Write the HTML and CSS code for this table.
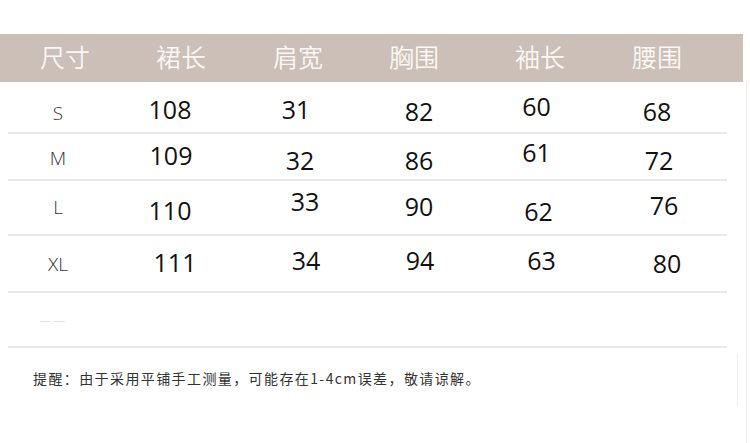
FILE: index.html
```html
<!DOCTYPE html>
<html lang="zh-CN">
<head>
<meta charset="utf-8">
<title>尺码表</title>
<link rel="stylesheet" href="styles.css">
</head>
<body>
<div class="page">
  <div class="sheet">
    <div class="head">
      <div>尺寸</div>
      <div>裙长</div>
      <div>肩宽</div>
      <div>胸围</div>
      <div>袖长</div>
      <div>腰围</div>
    </div>
    <div class="row r1">
      <div class="size y6">S</div>
      <div class="num y2 x-1">108</div>
      <div class="num y2 x-4">31</div>
      <div class="num y4">82</div>
      <div class="num y-1">60</div>
      <div class="num y4 x-2">68</div>
    </div>
    <div class="row r2">
      <div class="size y1">M</div>
      <div class="num y-2">109</div>
      <div class="num y3">32</div>
      <div class="num y3">86</div>
      <div class="num y-5">61</div>
      <div class="num y3">72</div>
    </div>
    <div class="row r3">
      <div class="size y-1">L</div>
      <div class="num y2 x-1">110</div>
      <div class="num y-7 x5">33</div>
      <div class="num y-2">90</div>
      <div class="num y3 x2">62</div>
      <div class="num y-3 x5">76</div>
    </div>
    <div class="row r4">
      <div class="size">XL</div>
      <div class="num y-2 x4">111</div>
      <div class="num y-4 x6">34</div>
      <div class="num y-4 x1">94</div>
      <div class="num y-4 x5">63</div>
      <div class="num y-1 x8">80</div>
    </div>
    <div class="row r5">
      <div class="blank"><span class="dash"></span><span class="dash"></span></div>
    </div>
    <div class="note">
      <p class="note-text">提醒：由于采用平铺手工测量，可能存在1-4cm误差，敬请谅解。</p>
      <span class="note-bar"></span>
    </div>
  </div>
  <span class="edge"></span>
</div>
</body>
</html>
```

FILE: styles.css
```css
html, body {
  margin: 0;
  padding: 0;
  background: #ffffff;
}

.page {
  display: flex;
  width: 750px;
  height: 443px;
  overflow: hidden;
}

.sheet {
  width: 746px;
  padding-top: 34px;
}

.edge {
  width: 1px;
  margin-top: 82px;
  background: #efefef;
}

.head {
  width: 743px;
  height: 48px;
  box-sizing: border-box;
  padding-bottom: 4px;
  background: #cbbfb7;
  display: grid;
  grid-template-columns: 130px 102px 132px 100px 152px 82px;
  font-family: "Noto Sans CJK SC", "Noto Sans", sans-serif;
  font-weight: 350;
  font-size: 25px;
  line-height: 44px;
  color: #fbf8f4;
  text-align: center;
}

.row {
  margin: 0 0 0 8px;
  width: 719px;
  border-bottom: 2px solid #e9e9e9;
  display: grid;
  grid-template-columns: 100px 126px 132px 106px 129px 116px;
  align-items: center;
  text-align: center;
  font-family: "Open Sans", "Liberation Sans", sans-serif;
}

.r1 { height: 50px; }
.r2 { height: 45px; }
.r3 { height: 53px; }
.r4 { height: 55px; }
.r5 { height: 53px; }

.num {
  font-size: 25px;
  line-height: 34px;
  color: #111111;
}

.size {
  font-size: 19px;
  line-height: 26px;
  font-weight: 300;
  color: #333333;
}

/* small per-cell nudges taken from the reference */
.y-7 { margin-top: -7px; margin-bottom: 7px; }
.y-5 { margin-top: -5px; margin-bottom: 5px; }
.y-4 { margin-top: -4px; margin-bottom: 4px; }
.y-3 { margin-top: -3px; margin-bottom: 3px; }
.y-2 { margin-top: -2px; margin-bottom: 2px; }
.y-1 { margin-top: -1px; margin-bottom: 1px; }
.y1 { margin-top: 1px; margin-bottom: -1px; }
.y2 { margin-top: 2px; margin-bottom: -2px; }
.y3 { margin-top: 3px; margin-bottom: -3px; }
.y4 { margin-top: 4px; margin-bottom: -4px; }
.y6 { margin-top: 6px; margin-bottom: -6px; }

.x-4 { margin-left: -4px; margin-right: 4px; }
.x-2 { margin-left: -2px; margin-right: 2px; }
.x-1 { margin-left: -1px; margin-right: 1px; }
.x1 { margin-left: 1px; margin-right: -1px; }
.x2 { margin-left: 2px; margin-right: -2px; }
.x4 { margin-left: 4px; margin-right: -4px; }
.x5 { margin-left: 5px; margin-right: -5px; }
.x6 { margin-left: 6px; margin-right: -6px; }
.x8 { margin-left: 8px; margin-right: -8px; }

.blank {
  display: flex;
  gap: 3px;
  padding-left: 32px;
  align-self: start;
  margin-top: 28px;
}

.dash {
  width: 11px;
  height: 1px;
  background: #e4e4e4;
}

.note {
  display: flex;
  padding-top: 5px;
}

.note-text {
  margin: 15px 0 0 0;
  padding-left: 33px;
  font-family: "Noto Sans CJK SC", "Noto Sans", sans-serif;
  font-size: 14px;
  line-height: 20px;
  letter-spacing: 1.4px;
  color: #333333;
}

.note-bar {
  margin-left: auto;
  margin-right: 8px;
  width: 1px;
  height: 54px;
  background: #f0f0f0;
}
```
